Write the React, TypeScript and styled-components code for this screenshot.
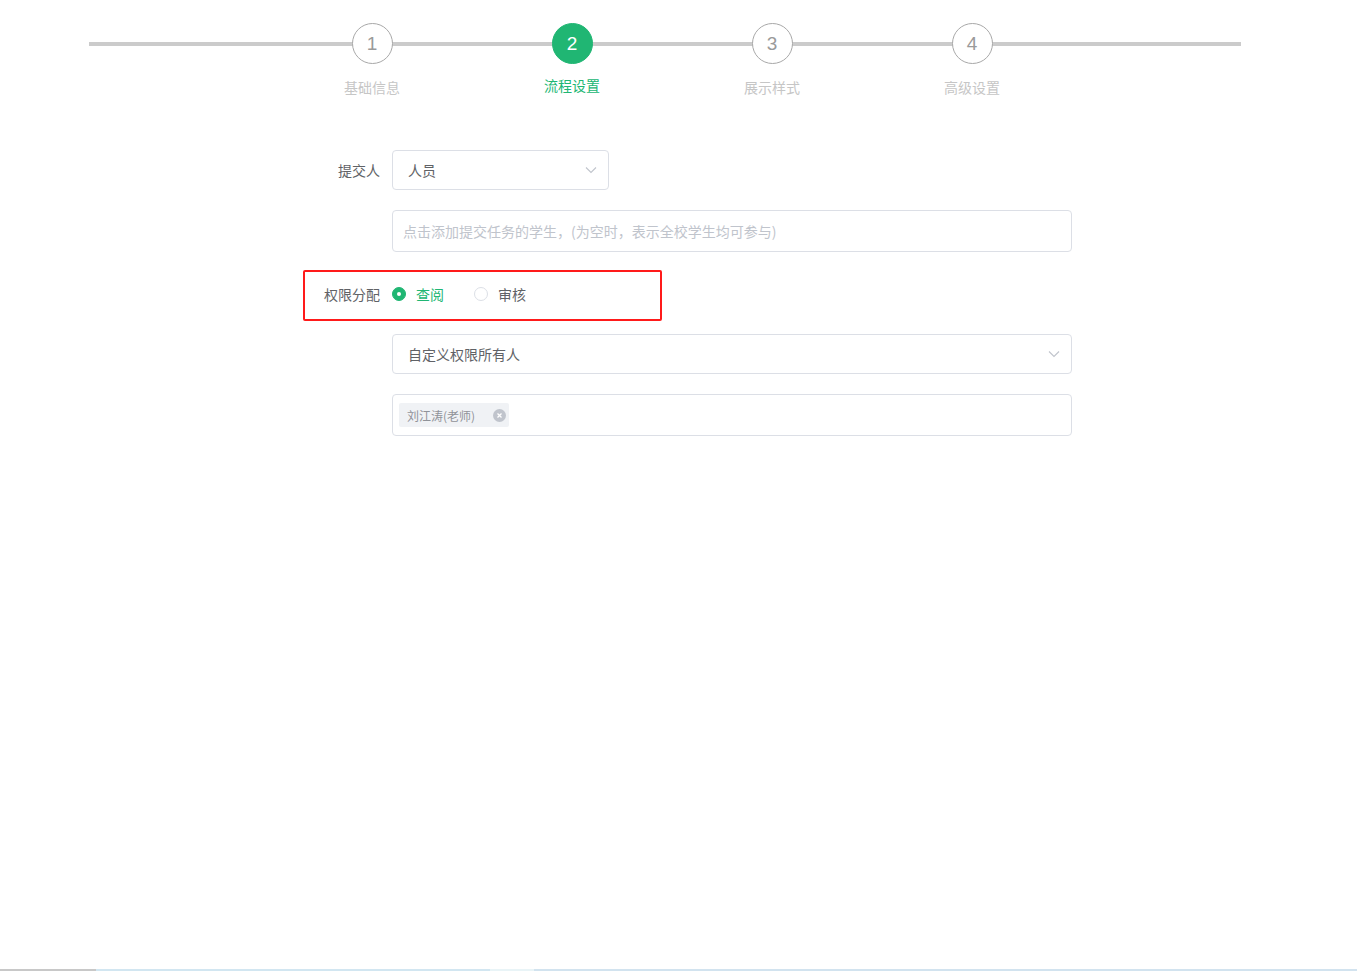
import React from "react";
import styled, { createGlobalStyle } from "styled-components";

const GREEN = "#20b673";

const Global = createGlobalStyle`
  html, body { margin: 0; padding: 0; background: #fff; }
  body { font-family: "Noto Sans CJK SC", "Noto Sans", "Liberation Sans", sans-serif; }
  * { box-sizing: border-box; }
`;

const Page = styled.div`
  min-height: 100vh;
  display: flex;
  flex-direction: column;
`;

const Main = styled.div`
  flex: 1;
  padding-top: 23px;
`;

const Steps = styled.div`
  position: relative;
  width: 1152px;
  margin-left: 89px;
  display: flex;
  gap: 80px;
  padding-left: 223px;
  &::before {
    content: "";
    position: absolute;
    left: 0;
    right: 0;
    top: 19px;
    height: 4px;
    background: #cbcbcb;
  }
`;

const Step = styled.div`
  position: relative;
  width: 120px;
  display: flex;
  flex-direction: column;
  align-items: center;
`;

const Circle = styled.div<{ $active?: boolean }>`
  width: 41px;
  height: 41px;
  border-radius: 50%;
  display: flex;
  align-items: center;
  justify-content: center;
  font-family: "Liberation Sans", Arial, sans-serif;
  font-size: 19px;
  color: ${(p) => (p.$active ? "#fff" : "#9a9a9a")};
  background: ${(p) => (p.$active ? GREEN : "#fff")};
  border: 1px solid ${(p) => (p.$active ? GREEN : "#a8a8a8")};
`;

const StepLabel = styled.div<{ $active?: boolean }>`
  margin-top: ${(p) => (p.$active ? "11px" : "13px")};
  font-size: 14px;
  line-height: 20px;
  color: ${(p) => (p.$active ? GREEN : "#c6c6c6")};
`;

const Form = styled.div`
  margin-top: 53px;
  margin-left: 300px;
  width: 772px;
  display: flex;
  flex-direction: column;
`;

const Row = styled.div<{ $mt?: number }>`
  display: flex;
  align-items: center;
  gap: 12px;
  margin-top: ${(p) => p.$mt ?? 0}px;
`;

const Highlight = styled.div`
  margin-top: 18px;
  margin-left: 3px;
  width: 359px;
  height: 51px;
  padding-bottom: 4px;
  border: 2px solid #ff1a1a;
  border-radius: 2px;
  display: flex;
  align-items: center;
  gap: 12px;
`;

const Label = styled.div<{ $w?: number }>`
  width: ${(p) => p.$w ?? 80}px;
  flex: none;
  text-align: right;
  font-size: 14px;
  color: #606266;
`;

const Field = styled.div<{ $w?: number; $h?: number; $pl?: number; $pr?: number }>`
  width: ${(p) => p.$w ?? 680}px;
  height: ${(p) => p.$h ?? 40}px;
  border: 1px solid #dcdfe6;
  border-radius: 4px;
  display: flex;
  align-items: center;
  padding: 0 ${(p) => p.$pr ?? 11}px 0 ${(p) => p.$pl ?? 15}px;
  font-size: 14px;
  color: #606266;
  background: #fff;
`;

const Indented = styled.div<{ $mt?: number }>`
  margin-left: 92px;
  margin-top: ${(p) => p.$mt ?? 0}px;
`;

const FieldText = styled.span<{ $placeholder?: boolean }>`
  flex: 1;
  color: ${(p) => (p.$placeholder ? "#c0c4cc" : "#606266")};
  white-space: nowrap;
`;

const Radio = styled.label<{ $checked?: boolean }>`
  display: flex;
  align-items: center;
  gap: 10px;
  font-size: 14px;
  color: ${(p) => (p.$checked ? GREEN : "#606266")};
  margin-right: 18px;
`;

const RadioDot = styled.span<{ $checked?: boolean }>`
  width: 14px;
  height: 14px;
  border-radius: 50%;
  border: 1px solid ${(p) => (p.$checked ? GREEN : "#dcdfe6")};
  background: ${(p) => (p.$checked ? GREEN : "#fff")};
  display: flex;
  align-items: center;
  justify-content: center;
  &::after {
    content: "";
    width: 4px;
    height: 4px;
    border-radius: 50%;
    background: #fff;
    display: ${(p) => (p.$checked ? "block" : "none")};
  }
`;

const Tag = styled.span`
  height: 24px;
  display: inline-flex;
  align-items: center;
  gap: 18px;
  padding: 0 3px 0 8px;
  background: #f0f2f5;
  border-radius: 2px;
  font-size: 12px;
  color: #909399;
`;

const TagClose = styled.span`
  width: 13px;
  height: 13px;
  border-radius: 50%;
  background: #c0c4cc;
  display: flex;
  align-items: center;
  justify-content: center;
`;

const BottomBar = styled.div`
  height: 2px;
  display: flex;
`;

const BarSeg = styled.div<{ $w?: number; $c: string }>`
  ${(p) => (p.$w ? `width: ${p.$w}px;` : "flex: 1;")}
  background: ${(p) => p.$c};
`;

const Chevron = () => (
  <svg width="12" height="8" viewBox="0 0 12 8" fill="none">
    <path d="M1 1.5 L6 6.5 L11 1.5" stroke="#c0c4cc" strokeWidth="1.1" />
  </svg>
);

const steps = ["基础信息", "流程设置", "展示样式", "高级设置"];

export default function App() {
  return (
    <Page>
      <Global />
      <Main>
        <Steps>
          {steps.map((s, i) => (
            <Step key={s}>
              <Circle $active={i === 1}>{i + 1}</Circle>
              <StepLabel $active={i === 1}>{s}</StepLabel>
            </Step>
          ))}
        </Steps>
        <Form>
          <Row>
            <Label>提交人</Label>
            <Field $w={217} $h={40} $pr={11}>
              <FieldText>人员</FieldText>
              <Chevron />
            </Field>
          </Row>
          <Indented $mt={20}>
            <Field $h={42} $pl={10}>
              <FieldText $placeholder>点击添加提交任务的学生，(为空时，表示全校学生均可参与)</FieldText>
            </Field>
          </Indented>
          <Highlight>
            <Label $w={75}>权限分配</Label>
            <Radio $checked>
              <RadioDot $checked />
              查阅
            </Radio>
            <Radio>
              <RadioDot />
              审核
            </Radio>
          </Highlight>
          <Indented $mt={13}>
            <Field $h={40} $pr={11}>
              <FieldText>自定义权限所有人</FieldText>
              <Chevron />
            </Field>
          </Indented>
          <Indented $mt={20}>
            <Field $h={42} $pl={6}>
              <Tag>
                刘江涛(老师)
                <TagClose>
                  <svg width="7" height="7" viewBox="0 0 7 7">
                    <path d="M1.5 1.5 L5.5 5.5 M5.5 1.5 L1.5 5.5" stroke="#fff" strokeWidth="1.3" />
                  </svg>
                </TagClose>
              </Tag>
            </Field>
          </Indented>
        </Form>
      </Main>
      <BottomBar>
        <BarSeg $w={96} $c="#c8c8c8" />
        <BarSeg $w={394} $c="#d2e6f1" />
        <BarSeg $w={44} $c="#e9f4f7" />
        <BarSeg $c="#d2e3ef" />
      </BottomBar>
    </Page>
  );
}
